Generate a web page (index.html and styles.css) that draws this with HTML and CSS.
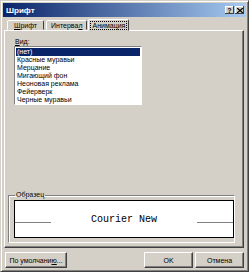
FILE: index.html
```html
<!DOCTYPE html>
<html lang="ru">

<head>
    <meta charset="UTF-8" />
    <title>Шрифт</title>
    <link rel="stylesheet" href="styles.css">
</head>

<body>
    <div class="window">
        <div class="titlebar">
            <span class="title">Шрифт</span>
            <div class="caption-buttons">
                <span class="cap-btn">?</span>
                <span class="cap-btn">
                    <svg width="6" height="5" viewBox="0 0 6 5">
                        <path d="M0 0 L6 5 M6 0 L0 5" stroke="#000" stroke-width="1.3" />
                    </svg>
                </span>
            </div>
        </div>

        <div class="dialog">
            <div class="tabs">
                <span class="tab first"><u>Ш</u>рифт</span>
                <span class="tab">Интерва<u>л</u></span>
                <span class="tab active"><span class="focus">Анимация</span></span>
            </div>

            <div class="panel">
                <div class="field-label"><u>В</u>ид:</div>
                <ul class="listbox">
                    <li class="selected">(нет)</li>
                    <li>Красные муравьи</li>
                    <li>Мерцание</li>
                    <li>Мигающий фон</li>
                    <li>Неоновая реклама</li>
                    <li>Фейерверк</li>
                    <li>Черные муравьи</li>
                </ul>

                <fieldset class="sample">
                    <legend>Образец</legend>
                    <div class="sample-box">
                        <span class="rule"></span>
                        <span class="sample-text">Courier New</span>
                        <span class="rule"></span>
                    </div>
                </fieldset>
            </div>

            <div class="buttons">
                <button class="btn wide">По умолчани<u>ю</u>...</button>
                <span class="spacer"></span>
                <button class="btn">OK</button>
                <button class="btn">Отмена</button>
            </div>
        </div>
    </div>
</body>

</html>
```

FILE: styles.css
```css
:root {
    --face: #d4d0c8;
    --shadow: #808080;
    --dark: #404040;
    --light: #ffffff;
    --select: #0a246a;
}

* {
    box-sizing: border-box;
}

body {
    margin: 0;
    background: var(--face);
    font-family: 'Liberation Sans', Arial, sans-serif;
    font-size: 7px;
    color: #000;
}

.window {
    width: 249px;
    height: 272px;
    background: var(--face);
    border: 1px solid;
    border-color: var(--face) var(--dark) var(--dark) var(--face);
    box-shadow: inset 1px 1px 0 var(--light), inset -1px -1px 0 var(--shadow);
    padding: 2px;
    display: flex;
    flex-direction: column;
}

.titlebar {
    height: 14px;
    flex: none;
    background: linear-gradient(90deg, #0a246a, #a6caf0);
    display: flex;
    align-items: center;
    justify-content: space-between;
    padding: 0 2px 0 3px;
}

.title {
    color: #fff;
    font-weight: bold;
    font-size: 8px;
}

.caption-buttons {
    display: flex;
    gap: 1px;
}

.cap-btn {
    width: 9px;
    height: 8px;
    background: var(--face);
    box-shadow: inset -1px -1px 0 var(--dark), inset 1px 1px 0 var(--light);
    display: flex;
    align-items: center;
    justify-content: center;
    font-size: 7px;
    font-weight: bold;
    line-height: 1;
}

.dialog {
    flex: 1;
    display: flex;
    flex-direction: column;
    padding: 2px 2px 2px 1px;
}

.tabs {
    display: flex;
    align-items: flex-end;
    padding-left: 3px;
    height: 11px;
    flex: none;
    position: relative;
    z-index: 1;
}

.tab {
    height: 10px;
    padding: 0 4px;
    border: 1px solid;
    border-color: var(--light) var(--dark) transparent var(--light);
    border-radius: 2px 2px 0 0;
    margin-right: 2px;
    line-height: 9px;
    background: var(--face);
    white-space: nowrap;
}

.tab.first {
    padding: 0 6px;
}

.tab.active {
    height: 12px;
    margin-left: -1px;
    margin-bottom: -1px;
    padding: 1px 2px 0;
    border-bottom: 1px solid var(--face);
}

.focus {
    outline: 1px dotted #000;
    padding: 0 1px;
}

.panel {
    height: 218px;
    flex: none;
    border: 1px solid;
    border-color: var(--light) var(--dark) var(--dark) var(--light);
    box-shadow: inset -1px -1px 0 var(--shadow);
    padding: 7px 8px 4px 2px;
    display: flex;
    flex-direction: column;
}

.field-label {
    padding-left: 8px;
    line-height: 8px;
}

.listbox {
    list-style: none;
    margin: 0 0 0 7px;
    padding: 1px;
    width: 128px;
    height: 59px;
    background: #fff;
    border: 1px solid;
    border-color: var(--shadow) var(--light) var(--light) var(--shadow);
}

.listbox li {
    height: 8px;
    line-height: 8px;
    padding-left: 1px;
    white-space: nowrap;
}

.listbox li.selected {
    background: var(--select);
    color: #fff;
}

.sample {
    margin: auto 0 0 1px;
    padding: 1px 0 4px 5px;
    border: 1px solid;
    border-color: var(--shadow) var(--light) var(--light) var(--shadow);
    box-shadow: inset 1px 1px 0 var(--light), 1px 1px 0 var(--shadow) inset;
}

.sample legend {
    padding: 0 1px;
    margin-left: 1px;
    line-height: 8px;
}

.sample-box {
    height: 38px;
    background: #fff;
    border: 1px solid #000;
    display: flex;
    align-items: center;
    gap: 40px;
    padding-top: 6px;
}

.rule {
    flex: 1;
    height: 1px;
    background: var(--shadow);
}

.sample-text {
    font-family: 'Liberation Mono', 'Courier New', monospace;
    font-size: 10px;
    transform: translateY(-3px);
}

.buttons {
    display: flex;
    gap: 2px;
    margin-top: 4px;
    padding-left: 1px;
}

.spacer {
    flex: 1;
}

.btn {
    height: 16px;
    width: 49px;
    font-family: inherit;
    font-size: 7px;
    white-space: nowrap;
    background: var(--face);
    border: 1px solid;
    border-color: var(--light) var(--dark) var(--dark) var(--light);
    box-shadow: inset -1px -1px 0 var(--shadow);
    padding: 0;
}

.btn.wide {
    width: 62px;
}
```
